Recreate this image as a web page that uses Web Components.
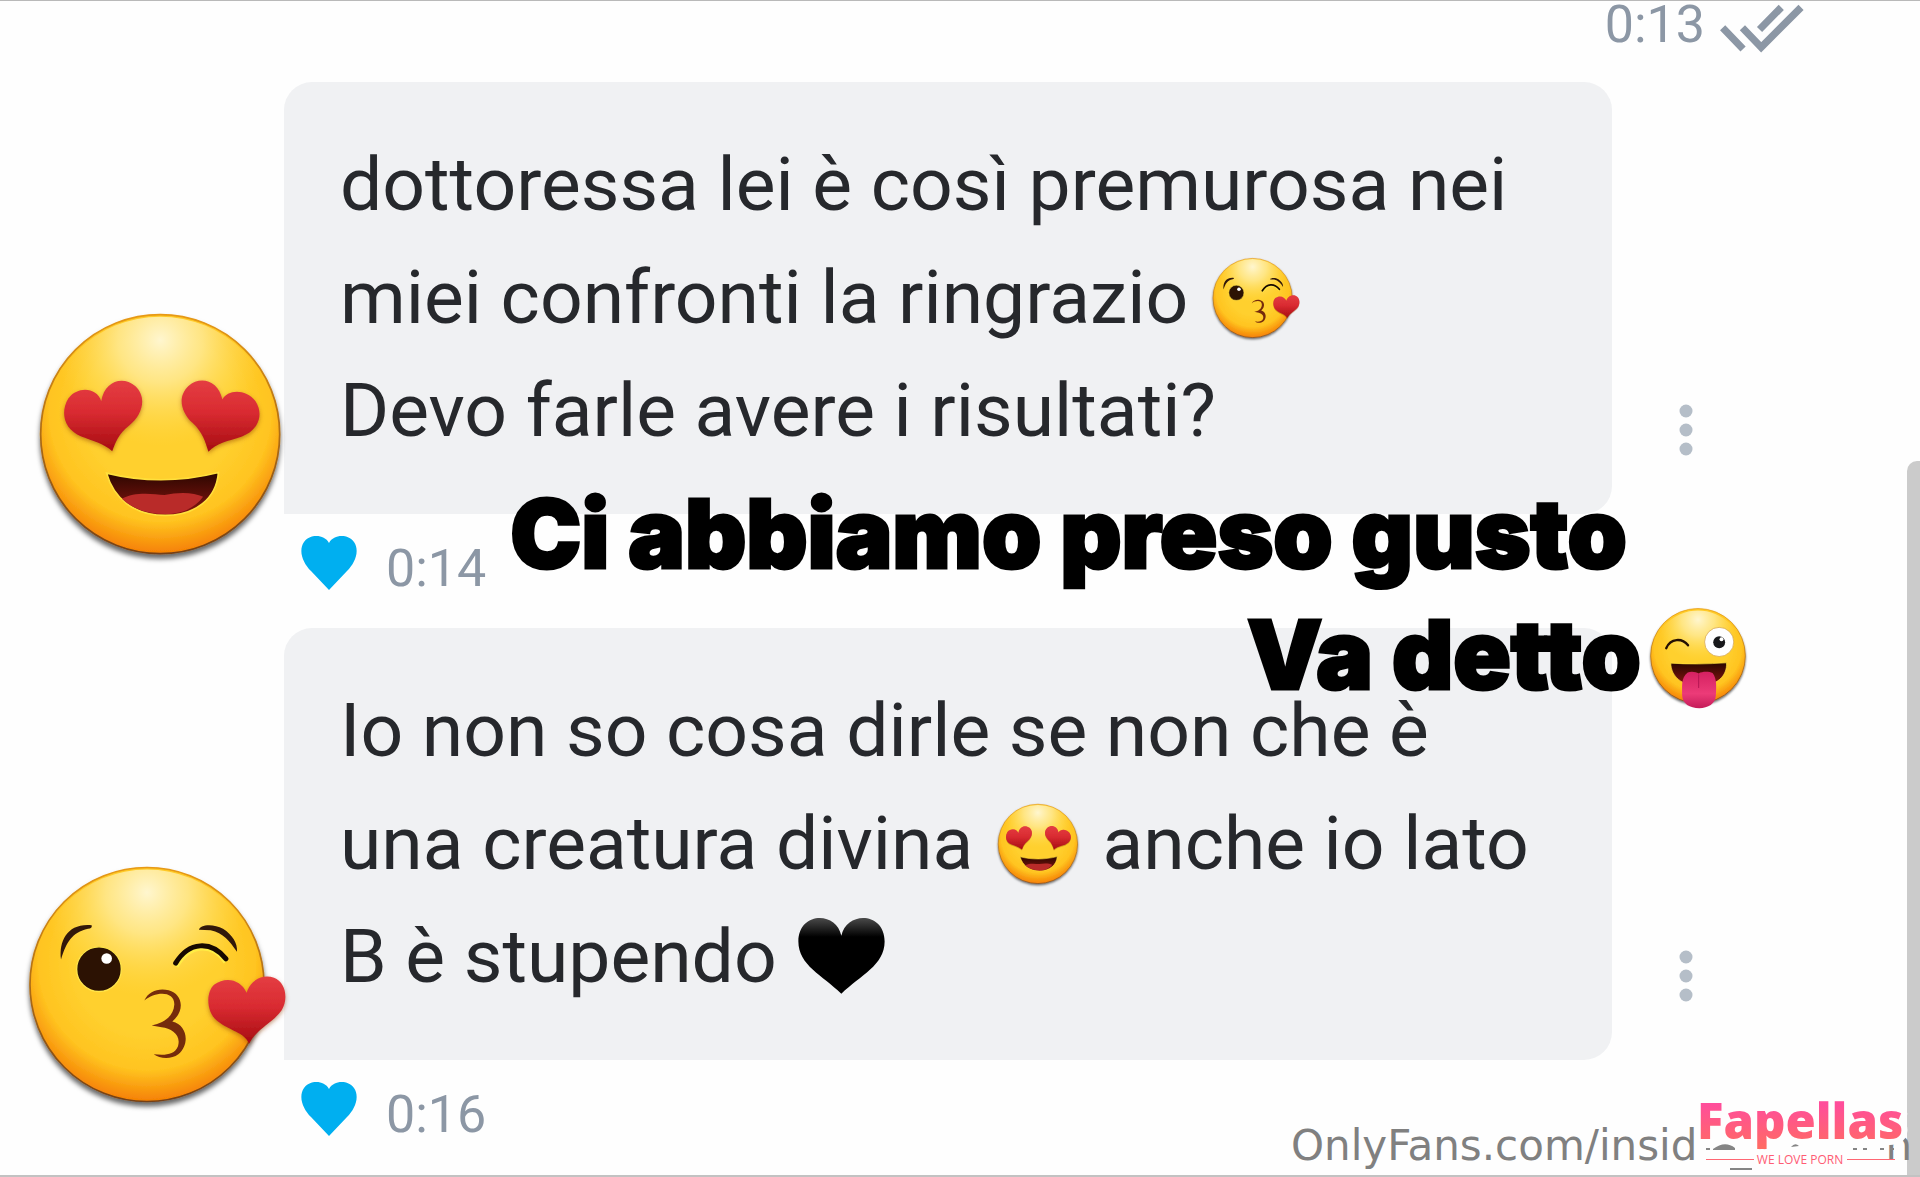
<!DOCTYPE html>
<html lang="it">
<head>
<meta charset="utf-8">
<title>Chat</title>
<style>
    html, body {
        margin: 0;
        height: 100%;
        overflow: hidden;
        background: #fefefe;
    }
</style>
</head>
<body>
<chat-screen></chat-screen>

<script>
const FACES = {
    love: {
        box: '112 92 740 760', cx: 481, cy: 462, r: 361,
        art: `
            <g filter="url(#soft)" fill="url(#red)">
                <path d="M304 363C314 302 368 286 406 317C444 352 426 407 389 435C355 462 347 486 337 513C312 490 282 484 242 468C192 447 180 397 205 355C235 315 292 323 304 363Z"/>
                <path d="M668 358C656 300 602 285 566 317C530 352 546 398 578 428C609 457 616 484 626 515C652 487 684 484 727 469C778 449 793 401 767 362C737 324 682 328 668 358Z"/>
            </g>
            <path fill="url(#mouth)" stroke="#ffe03c" stroke-width="5" d="M320 579C430 606 545 605 656 577C650 655 588 706 496 706C404 706 342 657 320 579Z"/>
            <path fill="#b92b29" d="M366 656C400 635 455 640 494 645C535 635 583 636 610 650C584 686 543 702 496 702C443 702 397 686 366 656Z"/>`
    },
    kiss: {
        box: '82 72 780 740', cx: 442, cy: 433, r: 353,
        art: `
            <path fill="#32180a" d="M184 358C177 300 205 248 276 255C278 261 274 265 265 266C216 278 201 305 184 358Z"/>
            <path fill="#32180a" d="M598 269C599 253 642 249 670 266C698 284 714 309 712 335C690 302 671 279 633 270Z"/>
            <circle cx="298" cy="387" r="67" fill="#2c1203" stroke="#ffe54b" stroke-width="4"/>
            <circle cx="321" cy="355" r="16" fill="#fff"/>
            <path fill="none" stroke="#ffed45" stroke-width="16" d="M529 379C570 308 637 306 679 365"/>
            <path fill="none" stroke="#170900" stroke-width="15" stroke-linecap="round" d="M528 369C568 303 634 301 679 356"/>
            <path fill="#752b0c" d="M434 481C447 451 479 443 507 450C548 461 558 509 518 544C564 555 571 613 536 642C515 658 480 656 462 642C493 645 524 646 535 618C545 584 516 565 486 561L456 556C493 548 522 529 524 492C524 450 465 454 434 481Z"/>
            <path filter="url(#soft)" fill="url(#red)" d="M741 458C752 420 790 400 823 413C858 427 867 475 846 510C821 547 775 562 748 611C735 576 690 573 652 542C620 515 618 458 643 434C679 407 724 419 741 458Z"/>`
    },
    wink: {
        box: '145 82 296 310', cx: 293, cy: 229, r: 145,
        art: `
            <path fill="none" stroke="#251004" stroke-width="7" stroke-linecap="round" d="M197 206C210 174 246 175 263 197"/>
            <circle cx="357" cy="187" r="44" fill="#fff" stroke="#cf9b41" stroke-width="2"/>
            <circle cx="357" cy="188" r="18" fill="#18191b"/>
            <circle cx="364" cy="179" r="6" fill="#fff"/>
            <path fill="url(#mouth)" stroke="#ffe03c" stroke-width="2" d="M211 251C265 255 322 254 379 250C382 290 349 320 296 320C244 320 211 290 211 251Z"/>
            <path fill="url(#tongue)" d="M262 279C275 275 287 278 295 282C306 276 326 276 337 281C351 298 348 328 347 348C346 374 323 387 297 387C268 387 246 374 245 348C246 324 240 296 262 279Z"/>
            <path fill="none" stroke="#b31552" stroke-width="3" d="M295 285V326"/>`
    }
}

class EmojiFace extends HTMLElement {

    constructor() {
        super()
        this.shadow = this.attachShadow({ mode: "open" })
    }

    connectedCallback() {
        const face = FACES[this.getAttribute('name')]
        this.shadow.innerHTML = `
        <style>
            :host { display: inline-block; line-height: 0; }
            svg { display: block; width: 100%; height: 100%; overflow: visible; }
        </style>
        <svg viewBox="${face.box}" role="img" aria-hidden="true">
            <defs>
                <radialGradient id="skin" cx=".5" cy=".4" r=".62">
                    <stop offset=".5" stop-color="#ffd02f"/>
                    <stop offset=".75" stop-color="#ffc420"/>
                    <stop offset="1" stop-color="#f47600"/>
                </radialGradient>
                <radialGradient id="shine" cx=".5" cy=".1" r=".45">
                    <stop offset="0" stop-color="#fff6cf"/>
                    <stop offset=".4" stop-color="#ffeda0" stop-opacity=".75"/>
                    <stop offset="1" stop-color="#ffdc50" stop-opacity="0"/>
                </radialGradient>
                <linearGradient id="edge" x2="0" y2="1">
                    <stop offset="0" stop-color="#e79913"/>
                    <stop offset="1" stop-color="#744015"/>
                </linearGradient>
                <linearGradient id="red" x2="0" y2="1">
                    <stop offset="0" stop-color="#e43d42"/>
                    <stop offset=".45" stop-color="#d92b31"/>
                    <stop offset="1" stop-color="#a60c12"/>
                </linearGradient>
                <linearGradient id="mouth" x2="0" y2="1">
                    <stop offset="0" stop-color="#2b0700"/>
                    <stop offset="1" stop-color="#8a1510"/>
                </linearGradient>
                <linearGradient id="tongue" x2="0" y2="1">
                    <stop offset="0" stop-color="#d52161"/>
                    <stop offset=".6" stop-color="#ec3b78"/>
                    <stop offset="1" stop-color="#c51c59"/>
                </linearGradient>
                <filter id="soft" x="-20%" y="-20%" width="140%" height="140%">
                    <feDropShadow dx="0" dy="6" stdDeviation="6" flood-color="#8b3900" flood-opacity=".5"/>
                </filter>
                <filter id="ground" x="-20%" y="-20%" width="140%" height="140%">
                    <feDropShadow dx="0" dy="${face.r / 28}" stdDeviation="${face.r / 45}" flood-opacity=".6"/>
                </filter>
            </defs>
            <circle cx="${face.cx}" cy="${face.cy}" r="${face.r - 2}" fill="url(#skin)" stroke="url(#edge)" stroke-width="${face.r / 70}" filter="url(#ground)"/>
            <circle cx="${face.cx}" cy="${face.cy}" r="${face.r - 8}" fill="url(#shine)"/>
            ${face.art}
        </svg>`
    }
}

class BlackHeart extends HTMLElement {

    constructor() {
        super()
        this.shadow = this.attachShadow({ mode: "open" })
        this.shadow.innerHTML = `
        <style>
            :host { display: inline-block; line-height: 0; }
            svg { display: block; width: 100%; height: 100%; }
        </style>
        <svg viewBox="110 82 263 230" aria-hidden="true">
            <defs>
                <linearGradient id="gloss" x2="0" y2="1">
                    <stop offset="0" stop-color="#4a4a4a"/>
                    <stop offset=".25" stop-color="#000"/>
                </linearGradient>
            </defs>
            <path fill="url(#gloss)" d="M241 136C226 60 111 63 111 153C111 225 184 255 241 311C299 255 372 225 372 153C372 63 257 60 241 136Z"/>
        </svg>`
    }
}

class MessageMeta extends HTMLElement {

    constructor() {
        super()
        this.shadow = this.attachShadow({ mode: "open" })
        this.shadow.innerHTML = `
        <style>
            :host {
                display: flex;
                align-items: center;
                gap: 28px;
                height: 114px;
                padding: 0 0 4px 301px;
                box-sizing: border-box;
                font-size: 52px;
                line-height: 60px;
                color: #8c97a5;
            }
            button {
                width: 57px;
                height: 54px;
                margin-bottom: 12px;
                padding: 0;
                border: 0;
                background: none;
            }
            svg { display: block; }
        </style>
        <button type="button" aria-label="Mi piace">
            <svg width="57" height="54" viewBox="0 0 57 54"><path fill="#00aff0" d="M28 7C23 -2 9 -2 3 6C-3 15 2 27 10 35L28 54L46 35C54 27 59 15 53 6C47 -2 33 -2 28 7Z"/></svg>
        </button>
        <time><slot></slot></time>
        `
    }
}

class ChatMessage extends HTMLElement {

    constructor() {
        super()
        this.shadow = this.attachShadow({ mode: "open" })
        this.shadow.innerHTML = `
        <style>
            :host {
                display: flex;
                align-items: flex-end;
                padding-left: 284px;
            }
            .bubble {
                flex: 1;
                padding: 46px 24px 47px 56px;
                border-radius: 28px 28px 28px 0;
                background: #f0f1f3;
                color: #26282c;
                font-size: 75px;
                line-height: 113px;
                white-space: nowrap;
            }
            .side {
                width: 308px;
                display: flex;
                padding: 0 0 44px 54px;
                box-sizing: border-box;
            }
            button {
                width: 40px;
                height: 80px;
                padding: 0;
                border: 0;
                background: none;
            }
            svg { display: block; margin: auto; fill: #b5bec8; }
        </style>
        <div class="bubble"><slot></slot></div>
        <div class="side">
            <button type="button" aria-label="Altro">
                <svg width="14" height="52" viewBox="0 0 14 52">
                    <circle cx="7" cy="7" r="6.500"/><circle cx="7" cy="26" r="6.500"/><circle cx="7" cy="45" r="6.500"/>
                </svg>
            </button>
        </div>
        `
    }
}

class SiteLogo extends HTMLElement {

    constructor() {
        super()
        this.shadow = this.attachShadow({ mode: "open" })
        this.shadow.innerHTML = `
        <style>
            :host { display: block; }
            svg { display: block; overflow: visible; }
            text { font-family: "Open Sans", "Noto Sans", sans-serif; paint-order: stroke; stroke: #fefefe; stroke-linejoin: round; }
            .name { font-size: 49px; font-weight: 800; stroke-width: 12px; }
            .tag { font-size: 12px; stroke-width: 12px; }
        </style>
        <svg width="220" height="80" viewBox="0 0 220 80">
            <defs>
                <linearGradient id="pink" gradientUnits="userSpaceOnUse" x1="0" y1="8" x2="0" y2="52">
                    <stop offset="0" stop-color="#ff4d9b"/>
                    <stop offset="1" stop-color="#ff6b63"/>
                </linearGradient>
            </defs>
            <text class="name" x="4" y="43" fill="url(#pink)">Fapellas</text>
            <text class="tag" x="107" y="68" text-anchor="middle" fill="#ff5c74">WE LOVE PORN</text>
            <path stroke="#ff6673" d="M13 63.500H61M154 63.500H202"/>
        </svg>
        `
    }
}

class ChatScreen extends HTMLElement {

    constructor() {
        super()
        this.shadow = this.attachShadow({ mode: "open" })
        this.shadow.innerHTML = `
        <style>
            :host {
                display: block;
                position: relative;
                height: 100vh;
                box-sizing: border-box;
                overflow: hidden;
                border-top: 1px solid #b9b9b9;
                border-bottom: 2px solid #c2c2c2;
                font-family: Roboto, "Noto Sans", sans-serif;
            }
            .sent {
                display: flex;
                justify-content: flex-end;
                gap: 15px;
                height: 81px;
                padding-right: 116px;
                font-size: 52px;
                line-height: 48px;
                color: #8c97a5;
            }
            .sent svg { padding-top: 3px; }
            .small { width: 82px; height: 84px; margin: 0 5px; vertical-align: -18px; }
            .small.kiss { width: 88px; }
            black-heart { width: 87px; height: 76px; margin: 0 3px; vertical-align: -12px; }
            .sticker { position: absolute; }
            .sticker.love { left: 37px; top: 310px; width: 247px; height: 253px; }
            .sticker.kiss { left: 27px; top: 863px; width: 260px; height: 247px; }
            .caption {
                position: absolute;
                top: 472px;
                right: 173px;
                margin: 0;
                display: flex;
                flex-direction: column;
                align-items: flex-end;
                font: 900 95px/121px Inter, sans-serif;
                color: #000;
                -webkit-text-stroke: 3px #000;
                stroke-linejoin: round;
                white-space: nowrap;
            }
            .caption .first { margin-right: 120px; }
            .caption .second { display: flex; align-items: center; gap: 8px; }
            .caption emoji-face { width: 98px; height: 103px; padding-top: 8px; }
            .scrollbar {
                position: absolute;
                top: 460px;
                right: 0;
                bottom: 0;
                width: 13px;
                border-top-left-radius: 10px;
                background: #cbcbcb;
            }
            .watermark {
                position: absolute;
                right: 8px;
                bottom: 5px;
                display: flex;
                justify-content: space-between;
                width: 621px;
                font: 42px/49px "DejaVu Sans", sans-serif;
                color: #808080;
            }
            .remains { position: absolute; right: 20px; bottom: 4px; }
            site-logo { position: absolute; right: 7px; bottom: -1px; }
        </style>
        <div class="sent">
            <time>0:13</time>
            <svg width="84" height="49" viewBox="480 10 255 148" fill="none" stroke="#8c97a5" stroke-width="22" aria-label="Letto">
                <path d="M488 82L550 146M600 87L666 20"/>
                <path d="M548 82L605 141L726 20"/>
            </svg>
        </div>
        <chat-message>dottoressa lei è così premurosa nei<br>miei confronti la ringrazio <emoji-face class="small kiss" name="kiss"></emoji-face><br>Devo farle avere i risultati?</chat-message>
        <message-meta>0:14</message-meta>
        <chat-message>Io non so cosa dirle se non che è<br>una creatura divina <emoji-face class="small" name="love"></emoji-face> anche io lato<br>B è stupendo <black-heart></black-heart></chat-message>
        <message-meta>0:16</message-meta>

        <emoji-face class="sticker love" name="love"></emoji-face>
        <emoji-face class="sticker kiss" name="kiss"></emoji-face>
        <p class="caption">
            <span class="first">Ci abbiamo preso gusto</span>
            <span class="second">Va detto<emoji-face name="wink"></emoji-face></span>
        </p>

        <div class="scrollbar"></div>
        <div class="watermark"><span>OnlyFans.com/insid</span><span>n</span></div>
        <site-logo></site-logo>
        <svg class="remains" width="200" height="32" viewBox="0 0 200 32" fill="#858585" aria-hidden="true">
            <path d="M6 9h4v2H6zM13 10Q25 1 35 9v2H13zM91 8Q95 3 99 7zM153 9h4v2h-4zM163 9h4v2h-4zM180 9h4v2h-4zM190 9h4v2h-4zM30 29h22v2H30z"/>
        </svg>
        `
    }
}

customElements.define('emoji-face', EmojiFace)
customElements.define('black-heart', BlackHeart)
customElements.define('message-meta', MessageMeta)
customElements.define('chat-message', ChatMessage)
customElements.define('site-logo', SiteLogo)
customElements.define('chat-screen', ChatScreen)
</script>
</body>
</html>
